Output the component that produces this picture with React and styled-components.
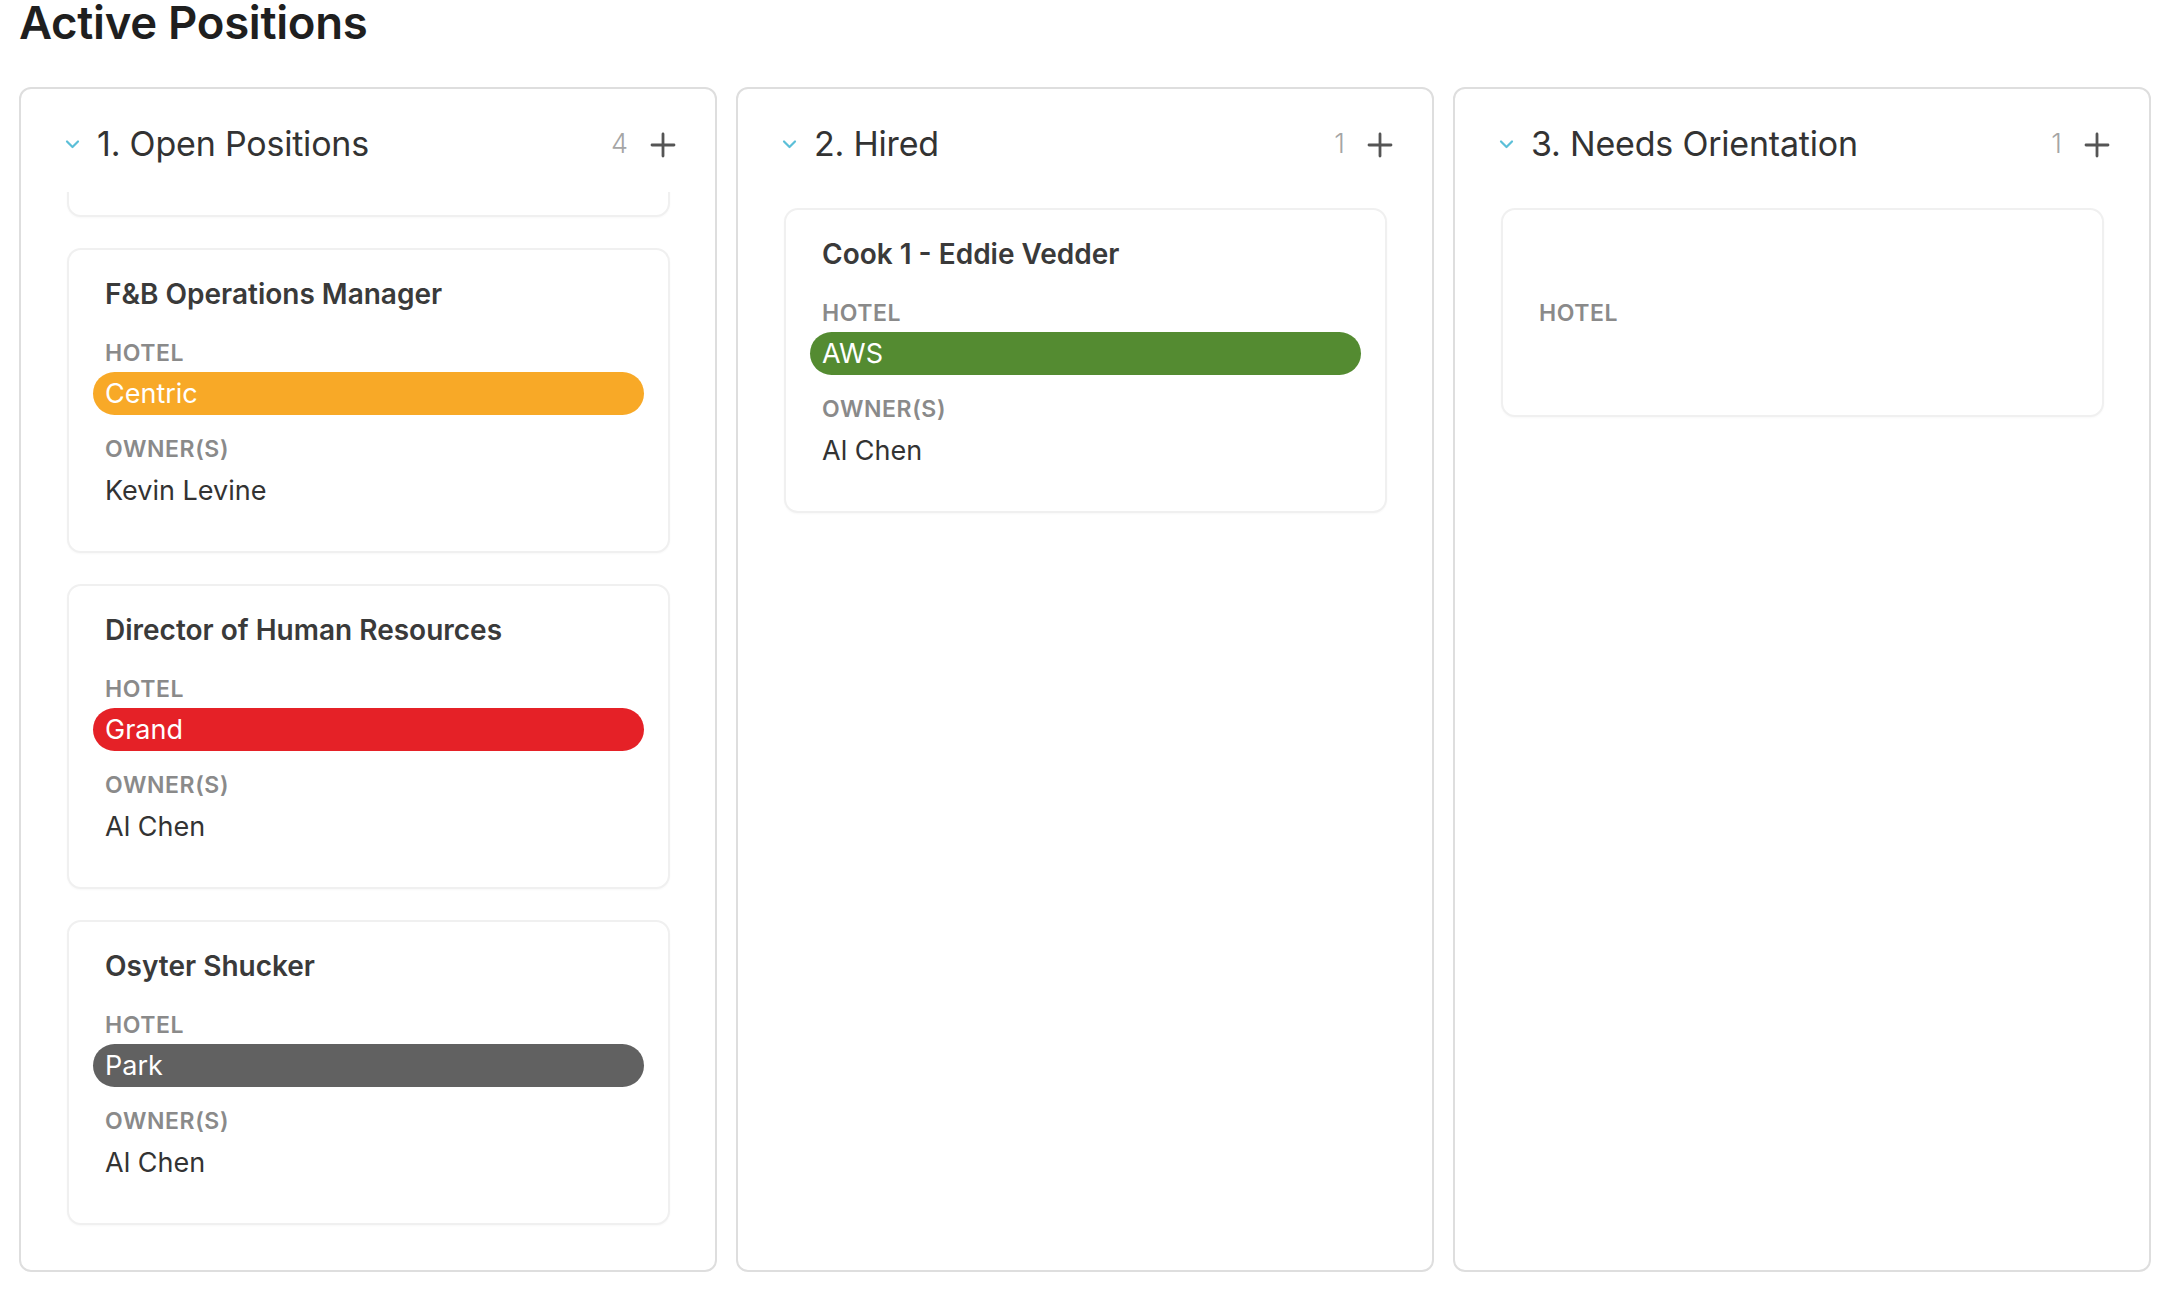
import React, { useEffect, useRef } from 'react'
import styled, { createGlobalStyle } from 'styled-components'

const GlobalStyle = createGlobalStyle`
  html, body {
    margin: 0;
    padding: 0;
    background: #fff;
    font-family: Inter, "Noto Sans", "Liberation Sans", sans-serif;
    color: #333;
  }
`

const Page = styled.div`
  padding: 0 0 0 19px;
`

const PageTitle = styled.h1`
  margin: 0;
  font-size: 45.5px;
  line-height: 46px;
  font-weight: 600;
  color: #1f1f1f;
  letter-spacing: -0.3px;
`

const Board = styled.div`
  display: grid;
  grid-template-columns: repeat(3, 698px);
  gap: 19px;
  margin-top: 41px;
`

const Column = styled.section`
  height: 1185px;
  border: 2px solid #dedede;
  border-radius: 12px;
  display: flex;
  flex-direction: column;
  overflow: hidden;
  box-sizing: border-box;
`

const ColumnHeader = styled.header`
  flex: none;
  height: 103px;
  box-sizing: border-box;
  padding: 6px 39px 0 44px;
  display: flex;
  align-items: center;
`

const Chevron = styled.svg`
  width: 15px;
  height: 10px;
  flex: none;
  margin-right: 17px;
`

const ColumnTitle = styled.h2`
  margin: 0;
  flex: 1;
  font-size: 34px;
  font-weight: 400;
  color: #333;
  letter-spacing: -0.2px;
`

const Count = styled.span`
  font-size: 27px;
  font-weight: 300;
  color: #a5a5a5;
  margin-right: 22px;
`

const PlusIcon = styled.svg`
  width: 26px;
  height: 26px;
  flex: none;
  margin-top: 2px;
`

const CardList = styled.div`
  flex: 1;
  overflow: hidden;
  display: flex;
  flex-direction: column;
  gap: 31px;
  padding: 16px 45px 45px 46px;
`

const Card = styled.article`
  flex: none;
  min-height: ${(p) => (p.$filler ? '305px' : 'auto')};
  box-sizing: border-box;
  border: 2px solid #f0f0f0;
  border-radius: 14px;
  box-shadow: 0 1px 2px rgba(0, 0, 0, 0.03);
  padding: 28px 24px ${(p) => (p.$short ? 40 : 44)}px 24px;
  display: flex;
  flex-direction: column;
  background: #fff;
`

const CardTitle = styled.h3`
  margin: 0;
  min-height: 32px;
  padding-left: 12px;
  font-size: 28px;
  line-height: 32px;
  font-weight: 600;
  color: #3a3a3a;
`

const FieldLabel = styled.div`
  padding-left: 12px;
  margin-top: ${(p) => p.$gap}px;
  font-size: 23px;
  line-height: 26px;
  font-weight: 600;
  letter-spacing: 0.6px;
  color: #8a8a8a;
  text-transform: uppercase;
`

const Pill = styled.div`
  margin-top: 6px;
  height: 43px;
  border-radius: 22px;
  padding: 0 12px;
  display: flex;
  align-items: center;
  font-size: 27px;
  color: #fff;
  background: ${(p) => p.$color || 'transparent'};
`

const OwnerName = styled.div`
  padding-left: 12px;
  margin-top: 13px;
  font-size: 27px;
  line-height: 32px;
  color: #333;
`

const hotelColors = {
  Centric: '#f8a927',
  Grand: '#e52127',
  AWS: '#548b31',
  Park: '#616161',
}

const columns = [
  {
    title: '1. Open Positions',
    count: 4,
    scroll: 296,
    cards: [
      { filler: true },
      { title: 'F&B Operations Manager', hotel: 'Centric', owner: 'Kevin Levine' },
      { title: 'Director of Human Resources', hotel: 'Grand', owner: 'Al Chen' },
      { title: 'Osyter Shucker', hotel: 'Park', owner: 'Al Chen' },
    ],
  },
  {
    title: '2. Hired',
    count: 1,
    cards: [{ title: 'Cook 1 - Eddie Vedder', hotel: 'AWS', owner: 'Al Chen' }],
  },
  {
    title: '3. Needs Orientation',
    count: 1,
    cards: [{ title: '', hotel: '', owner: '' }],
  },
]

function PositionCard({ card }) {
  // the first card of a scrolled list sits above the fold: only its bottom edge shows
  if (card.filler) return <Card $filler />

  return (
    <Card $short={!card.owner}>
      <CardTitle>{card.title}</CardTitle>
      <FieldLabel $gap={30}>Hotel</FieldLabel>
      <Pill $color={hotelColors[card.hotel]}>{card.hotel}</Pill>
      {card.owner && (
        <>
          <FieldLabel $gap={21}>Owner(s)</FieldLabel>
          <OwnerName>{card.owner}</OwnerName>
        </>
      )}
    </Card>
  )
}

function StageColumn({ column }) {
  const listRef = useRef(null)

  useEffect(() => {
    if (listRef.current && column.scroll) listRef.current.scrollTop = column.scroll
  }, [column.scroll])

  return (
    <Column>
      <ColumnHeader>
        <Chevron viewBox="0 0 15 10">
          <path d="M2 2.5 L7.5 8 L13 2.5" fill="none" stroke="#5bbfd8" strokeWidth="2.2" strokeLinecap="round" strokeLinejoin="round" />
        </Chevron>
        <ColumnTitle>{column.title}</ColumnTitle>
        <Count>{column.count}</Count>
        <PlusIcon viewBox="0 0 26 26">
          <path d="M13 2 V24 M2 13 H24" stroke="#555" strokeWidth="2.8" strokeLinecap="round" />
        </PlusIcon>
      </ColumnHeader>
      <CardList ref={listRef}>
        {column.cards.map((card, i) => (
          <PositionCard key={i} card={card} />
        ))}
      </CardList>
    </Column>
  )
}

export default function App() {
  return (
    <Page>
      <GlobalStyle />
      <PageTitle>Active Positions</PageTitle>
      <Board>
        {columns.map((c) => (
          <StageColumn key={c.title} column={c} />
        ))}
      </Board>
    </Page>
  )
}
